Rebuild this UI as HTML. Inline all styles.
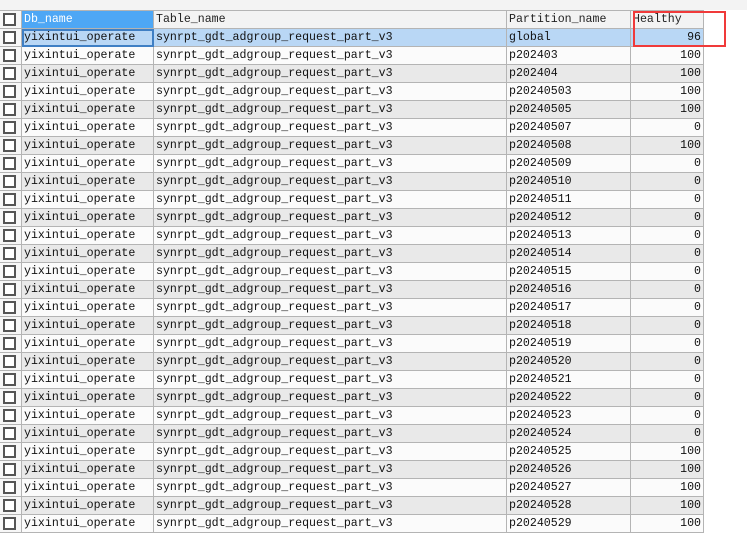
<!DOCTYPE html>
<html><head><meta charset="utf-8"><style>
*{margin:0;padding:0;box-sizing:border-box}
body{width:747px;height:538px;background:#fff;position:relative;overflow:hidden;font-family:"Liberation Mono",monospace;font-size:11.6px;color:#111}
.tb{position:absolute;left:0;top:0;width:747px;height:10px;background:#f3f3f3}
table{position:absolute;left:-1px;top:10px;border-collapse:collapse;table-layout:fixed;width:705px}
td{height:18px;border:1px solid #b4b4b4;padding:0 2px;white-space:nowrap;overflow:hidden;line-height:17px}
td.c{padding:0}
.cb{display:block;width:13px;height:13px;border:2px solid #555;background:#fff;margin:0 0 0 3px}
tr:nth-child(even) td{background:#e9e9e9}
tr:nth-child(odd) td{background:#fbfbfb}
tr.h td{background:#f3f3f3;color:#222}
tr.h td.sel{background:#4ea7f5;color:#fff}
tr.s td{background:#b9d7f5}
tr.s td.f{outline:2px solid #3f7fc4;outline-offset:-2px}
td.n{text-align:right;padding-right:2px}
td.c{background:#f7f7f7 !important}
.red{position:absolute;left:633px;top:11px;width:93px;height:36px;border:2px solid #f03a3a}
</style></head><body>
<div class="tb"></div>
<table>
<colgroup><col style="width:22px"><col style="width:132px"><col style="width:353px"><col style="width:124px"><col style="width:73px"></colgroup>
<tr class="h"><td class="c"><span class="cb"></span></td><td class="sel">Db_name</td><td>Table_name</td><td>Partition_name</td><td>Healthy</td></tr>
<tr class="s"><td class="c"><span class="cb"></span></td><td class="f">yixintui_operate</td><td>synrpt_gdt_adgroup_request_part_v3</td><td>global</td><td class="n">96</td></tr>
<tr><td class="c"><span class="cb"></span></td><td>yixintui_operate</td><td>synrpt_gdt_adgroup_request_part_v3</td><td>p202403</td><td class="n">100</td></tr>
<tr><td class="c"><span class="cb"></span></td><td>yixintui_operate</td><td>synrpt_gdt_adgroup_request_part_v3</td><td>p202404</td><td class="n">100</td></tr>
<tr><td class="c"><span class="cb"></span></td><td>yixintui_operate</td><td>synrpt_gdt_adgroup_request_part_v3</td><td>p20240503</td><td class="n">100</td></tr>
<tr><td class="c"><span class="cb"></span></td><td>yixintui_operate</td><td>synrpt_gdt_adgroup_request_part_v3</td><td>p20240505</td><td class="n">100</td></tr>
<tr><td class="c"><span class="cb"></span></td><td>yixintui_operate</td><td>synrpt_gdt_adgroup_request_part_v3</td><td>p20240507</td><td class="n">0</td></tr>
<tr><td class="c"><span class="cb"></span></td><td>yixintui_operate</td><td>synrpt_gdt_adgroup_request_part_v3</td><td>p20240508</td><td class="n">100</td></tr>
<tr><td class="c"><span class="cb"></span></td><td>yixintui_operate</td><td>synrpt_gdt_adgroup_request_part_v3</td><td>p20240509</td><td class="n">0</td></tr>
<tr><td class="c"><span class="cb"></span></td><td>yixintui_operate</td><td>synrpt_gdt_adgroup_request_part_v3</td><td>p20240510</td><td class="n">0</td></tr>
<tr><td class="c"><span class="cb"></span></td><td>yixintui_operate</td><td>synrpt_gdt_adgroup_request_part_v3</td><td>p20240511</td><td class="n">0</td></tr>
<tr><td class="c"><span class="cb"></span></td><td>yixintui_operate</td><td>synrpt_gdt_adgroup_request_part_v3</td><td>p20240512</td><td class="n">0</td></tr>
<tr><td class="c"><span class="cb"></span></td><td>yixintui_operate</td><td>synrpt_gdt_adgroup_request_part_v3</td><td>p20240513</td><td class="n">0</td></tr>
<tr><td class="c"><span class="cb"></span></td><td>yixintui_operate</td><td>synrpt_gdt_adgroup_request_part_v3</td><td>p20240514</td><td class="n">0</td></tr>
<tr><td class="c"><span class="cb"></span></td><td>yixintui_operate</td><td>synrpt_gdt_adgroup_request_part_v3</td><td>p20240515</td><td class="n">0</td></tr>
<tr><td class="c"><span class="cb"></span></td><td>yixintui_operate</td><td>synrpt_gdt_adgroup_request_part_v3</td><td>p20240516</td><td class="n">0</td></tr>
<tr><td class="c"><span class="cb"></span></td><td>yixintui_operate</td><td>synrpt_gdt_adgroup_request_part_v3</td><td>p20240517</td><td class="n">0</td></tr>
<tr><td class="c"><span class="cb"></span></td><td>yixintui_operate</td><td>synrpt_gdt_adgroup_request_part_v3</td><td>p20240518</td><td class="n">0</td></tr>
<tr><td class="c"><span class="cb"></span></td><td>yixintui_operate</td><td>synrpt_gdt_adgroup_request_part_v3</td><td>p20240519</td><td class="n">0</td></tr>
<tr><td class="c"><span class="cb"></span></td><td>yixintui_operate</td><td>synrpt_gdt_adgroup_request_part_v3</td><td>p20240520</td><td class="n">0</td></tr>
<tr><td class="c"><span class="cb"></span></td><td>yixintui_operate</td><td>synrpt_gdt_adgroup_request_part_v3</td><td>p20240521</td><td class="n">0</td></tr>
<tr><td class="c"><span class="cb"></span></td><td>yixintui_operate</td><td>synrpt_gdt_adgroup_request_part_v3</td><td>p20240522</td><td class="n">0</td></tr>
<tr><td class="c"><span class="cb"></span></td><td>yixintui_operate</td><td>synrpt_gdt_adgroup_request_part_v3</td><td>p20240523</td><td class="n">0</td></tr>
<tr><td class="c"><span class="cb"></span></td><td>yixintui_operate</td><td>synrpt_gdt_adgroup_request_part_v3</td><td>p20240524</td><td class="n">0</td></tr>
<tr><td class="c"><span class="cb"></span></td><td>yixintui_operate</td><td>synrpt_gdt_adgroup_request_part_v3</td><td>p20240525</td><td class="n">100</td></tr>
<tr><td class="c"><span class="cb"></span></td><td>yixintui_operate</td><td>synrpt_gdt_adgroup_request_part_v3</td><td>p20240526</td><td class="n">100</td></tr>
<tr><td class="c"><span class="cb"></span></td><td>yixintui_operate</td><td>synrpt_gdt_adgroup_request_part_v3</td><td>p20240527</td><td class="n">100</td></tr>
<tr><td class="c"><span class="cb"></span></td><td>yixintui_operate</td><td>synrpt_gdt_adgroup_request_part_v3</td><td>p20240528</td><td class="n">100</td></tr>
<tr><td class="c"><span class="cb"></span></td><td>yixintui_operate</td><td>synrpt_gdt_adgroup_request_part_v3</td><td>p20240529</td><td class="n">100</td></tr>
</table>
<div class="red"></div>
</body></html>
